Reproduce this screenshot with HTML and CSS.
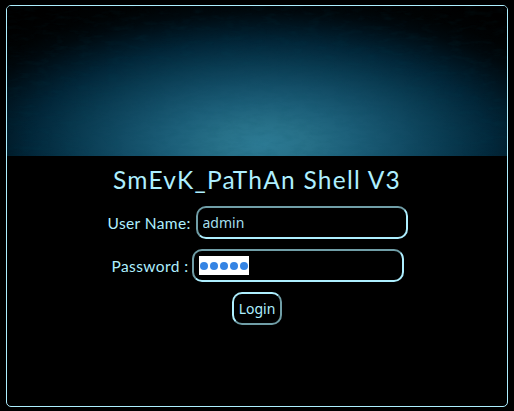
FILE: index.html
```html
<!DOCTYPE html>
<html lang="en">
<head>
<meta charset="utf-8">
<title>SmEvK_PaThAn Shell V3</title>
<link rel="stylesheet" href="styles.css">
</head>
<body>
<main class="frame">
  <div class="banner">
    <svg class="texture" width="500" height="150" aria-hidden="true">
      <filter id="grain" x="0" y="0" width="100%" height="100%">
        <feTurbulence type="fractalNoise" baseFrequency="0.07 0.2" numOctaves="4" seed="8"/>
        <feColorMatrix type="matrix" values="0 0 0 0 0  0 0 0 0 0.08  0 0 0 0 0.12  1.6 0 0 0 -0.72"/>
      </filter>
      <rect width="500" height="150" filter="url(#grain)"/>
    </svg>
  </div>
  <h1 class="title">SmEvK_PaThAn Shell V3</h1>
  <form class="login">
    <div class="row">
      <label class="label user-label" for="user">User Name:</label>
      <input class="field" id="user" type="text" value="admin">
    </div>
    <div class="row">
      <label class="label pass-label">Password :</label>
      <div class="field password"><span class="selection"><i class="dot"></i><i class="dot"></i><i class="dot"></i><i class="dot"></i><i class="dot"></i></span></div>
    </div>
    <button class="submit" type="button">Login</button>
  </form>
</main>
</body>
</html>
```
FILE: styles.css
```css
* { box-sizing: border-box; }
body {
  margin: 0;
  padding: 5px 6px 4px;
  background: #000;
  color: #aeefff;
  font-family: Lato, sans-serif;
  overflow: hidden;
}
.frame {
  width: 502px;
  height: 402px;
  border: 1px solid #aeefff;
  border-radius: 5px;
}
.banner {
  height: 150px;
  overflow: hidden;
  border-radius: 4px 4px 0 0;
  background: radial-gradient(ellipse 325px 142px at 255px 138px, #2c7a94 0%, #277088 14%, #1c5f79 28%, #124c65 43%, #093a50 57%, #02273a 71%, #001622 83%, #00090e 93%, #000304 102%, #000 115%);
}
.texture {
  display: block;
  opacity: .14;
}
.title {
  margin: 7px 0 0;
  height: 34px;
  line-height: 34px;
  text-align: center;
  font-size: 24.5px;
  font-weight: 400;
  letter-spacing: 1.25px;
  white-space: nowrap;
}
.login {
  margin-top: 9px;
  display: flex;
  flex-direction: column;
  align-items: center;
  gap: 10px;
}
.row {
  display: flex;
  align-items: center;
  height: 33px;
}
.label {
  padding-left: 1px;
  font-size: 15.5px;
  letter-spacing: .4px;
  white-space: nowrap;
}
.user-label { width: 89px; }
.pass-label { width: 81px; }
.field {
  width: 212px;
  height: 33px;
  padding: 0 5px;
  border: 2px solid;
  border-color: #709ea7 #aeefff #aeefff #709ea7;
  border-radius: 10px;
  background: #000;
  color: #a4dfee;
  font: 14px "Noto Sans", sans-serif;
  outline: none;
}
.password {
  display: flex;
  align-items: center;
}
.selection {
  display: flex;
  align-items: center;
  width: 50px;
  height: 19px;
  padding: 0 1px;
  gap: 2px;
  background: #fff;
}
.dot {
  width: 8px;
  height: 8px;
  border-radius: 50%;
  background: #3584e4;
}
.submit {
  width: 50px;
  height: 33px;
  padding: 0;
  border: 2px solid;
  border-color: #aeefff #709ea7 #709ea7 #aeefff;
  border-radius: 10px;
  background: #000;
  color: #aeefff;
  font: 14px "Noto Sans", sans-serif;
}
```
